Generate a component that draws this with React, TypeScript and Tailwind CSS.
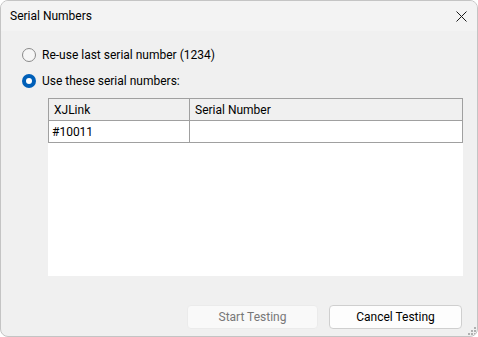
import React from "react";

const font = { fontFamily: 'Roboto, "Segoe UI", sans-serif' };

function Radio({ checked, label }: { checked: boolean; label: string }) {
  return (
    <div className="flex h-4 items-center">
      {checked ? (
        <div className="flex h-[14px] w-[14px] items-center justify-center rounded-full bg-[#005fb8]">
          <div className="h-[6px] w-[6px] rounded-full bg-white" />
        </div>
      ) : (
        <div className="h-[14px] w-[14px] rounded-full border border-[#8a8a8a] bg-[#f6f6f6]" />
      )}
      <span className="ml-[6px] text-[12px] leading-4 text-black">{label}</span>
    </div>
  );
}

export default function App() {
  return (
    <div className="h-[337px] w-[478px] bg-white" style={font}>
      <div className="flex h-[337px] w-[478px] flex-col overflow-hidden rounded-lg border border-[#c4c4c4] bg-[#f0f0f0]">
        <div className="flex h-[30px] shrink-0 items-center justify-between bg-[#f3f3f3] pl-[9px] pr-[10px]">
          <span className="text-[12px] text-black">Serial Numbers</span>
          <svg width="11" height="11" viewBox="0 0 11 11" className="mt-[1px]">
            <path d="M0.5 0.5 L10.5 10.5 M10.5 0.5 L0.5 10.5" stroke="#1a1a1a" strokeWidth="1" />
          </svg>
        </div>
        <div className="relative flex flex-1 flex-col pl-[21px] pr-[15px] pt-[16px]">
          <div className="flex flex-col gap-[10px]">
            <Radio checked={false} label="Re-use last serial number (1234)" />
            <Radio checked label="Use these serial numbers:" />
          </div>
          <div className="ml-[26px] mt-[9px] h-[178px] w-[415px] bg-white text-[12px] text-black">
            <div className="flex h-[23px] border border-[#a0a0a0] bg-[#f0f0f0]">
              <div className="flex w-[141px] items-center border-r border-[#a0a0a0] pl-[5px]">XJLink</div>
              <div className="flex flex-1 items-center pl-[5px]">Serial Number</div>
            </div>
            <div className="flex h-[22px] border-x border-b border-[#a0a0a0]">
              <div className="flex w-[141px] items-center border-r border-[#a0a0a0] pl-[3px]">#10011</div>
              <div className="flex-1" />
            </div>
          </div>
          <div className="mt-[29px] flex justify-end gap-[11px]">
            <button className="h-[24px] w-[131px] rounded-[4px] border border-[#ebebeb] bg-[#f9f9f9] text-[12px] text-[#777777]">
              Start Testing
            </button>
            <button className="h-[24px] w-[133px] rounded-[4px] border border-[#cfcfcf] bg-[#fdfdfd] text-[12px] text-black">
              Cancel Testing
            </button>
          </div>
          <svg width="8" height="8" viewBox="0 0 8 8" className="absolute bottom-[1px] right-[1px]">
            <rect x="6" y="0" width="2" height="2" fill="#b0b0b0" />
            <rect x="3" y="3" width="2" height="2" fill="#b0b0b0" />
            <rect x="6" y="3" width="2" height="2" fill="#b0b0b0" />
            <rect x="0" y="6" width="2" height="2" fill="#b0b0b0" />
            <rect x="3" y="6" width="2" height="2" fill="#b0b0b0" />
            <rect x="6" y="6" width="2" height="2" fill="#b0b0b0" />
          </svg>
        </div>
      </div>
    </div>
  );
}
